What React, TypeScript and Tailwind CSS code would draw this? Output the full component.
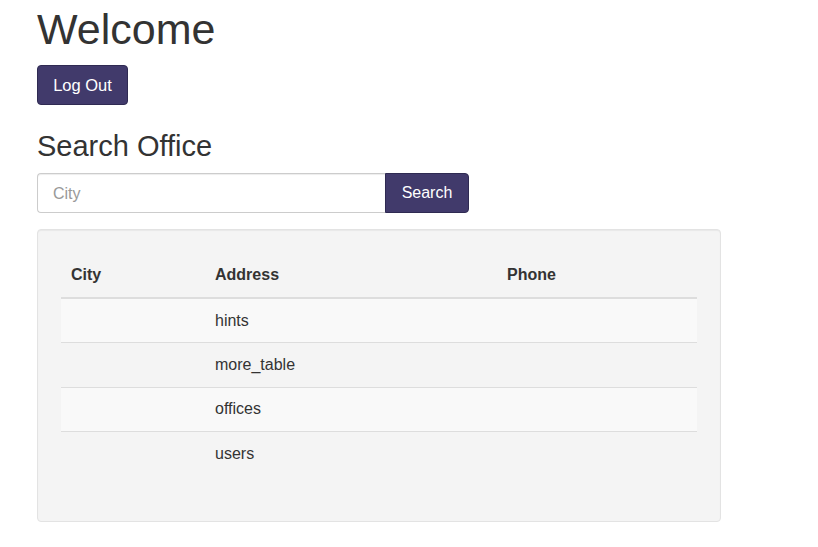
import React, { useState } from 'react';

const offices = [
  { city: '', address: 'hints', phone: '' },
  { city: '', address: 'more_table', phone: '' },
  { city: '', address: 'offices', phone: '' },
  { city: '', address: 'users', phone: '' },
];

export default function App() {
  const [city, setCity] = useState('');

  return (
    <div className="min-h-screen bg-white text-[#333] font-['Liberation_Sans',Arial,sans-serif]">
      <div className="pl-[37px] pt-[6px] w-[722px]">
        <h1 className="text-[43px] leading-[1.1] font-normal">Welcome</h1>
        <button className="mt-[12px] w-[91px] h-10 rounded border border-[#2f2a52] bg-[#413a6b] text-white text-[16.5px]">
          Log Out
        </button>

        <h2 className="mt-[26px] text-[29px] leading-[1.1] font-normal">Search Office</h2>
        <div className="mt-[10px] flex w-[432px] h-10">
          <input
            value={city}
            onChange={(e) => setCity(e.target.value)}
            placeholder="City"
            className="w-[348px] h-10 px-[15px] pt-[1px] text-base border border-[#ccc] border-r-0 rounded-l outline-none placeholder-[#999] shadow-[inset_0_1px_1px_rgba(0,0,0,0.075)]"
          />
          <button className="w-[84px] h-10 rounded-r border border-[#2f2a52] bg-[#413a6b] text-white text-base">
            Search
          </button>
        </div>

        {/* Results */}
        <div className="mt-4 w-[684px] px-[23px] pt-6 pb-[26px] bg-[#f4f4f4] border border-[#e3e3e3] rounded shadow-[inset_0_1px_1px_rgba(0,0,0,0.05)]">
          <table className="w-[636px] mb-5 border-collapse text-base leading-[1.42857]">
            <thead>
              <tr className="border-b-2 border-[#ddd]">
                <th className="w-[144px] px-[10px] py-[10px] text-left font-bold">City</th>
                <th className="w-[292px] px-[10px] py-[10px] text-left font-bold">Address</th>
                <th className="px-[10px] py-[10px] text-left font-bold">Phone</th>
              </tr>
            </thead>
            <tbody>
              {offices.map((o, i) => (
                <tr
                  key={o.address}
                  className={
                    (i % 2 === 0 ? 'bg-[#f9f9f9] ' : '') + (i > 0 ? 'border-t border-[#ddd]' : '')
                  }
                >
                  <td className="px-[10px] py-[10px]">{o.city}</td>
                  <td className="px-[10px] pt-[10.5px] pb-[10px]">{o.address}</td>
                  <td className="px-[10px] py-[10px]">{o.phone}</td>
                </tr>
              ))}
            </tbody>
          </table>
        </div>
      </div>
    </div>
  );
}
